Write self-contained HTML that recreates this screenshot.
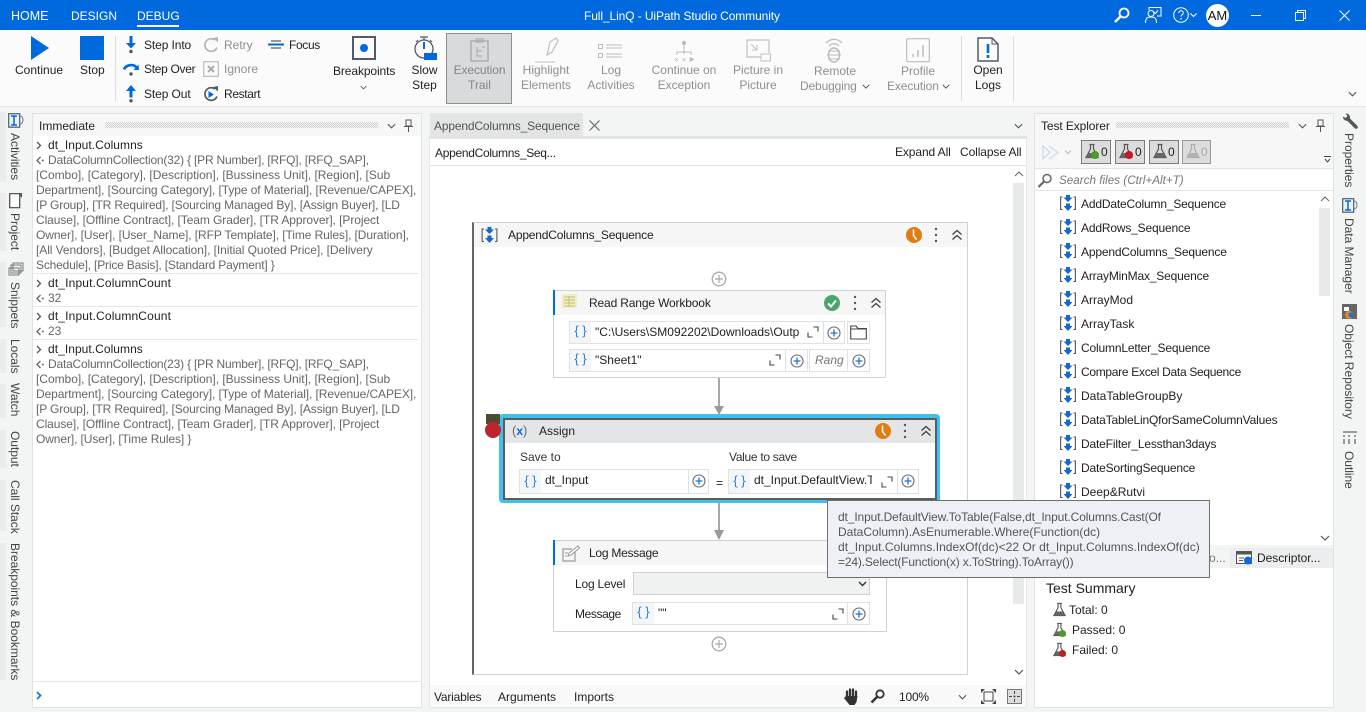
<!DOCTYPE html>
<html><head><meta charset="utf-8"><title>Full_LinQ - UiPath Studio Community</title>
<style>
html,body{margin:0;padding:0}
body{width:1366px;height:712px;overflow:hidden;position:relative;background:#f3f4f4;font:12px/16px "Liberation Sans",sans-serif;color:#222}
.t,.b,svg.a{position:absolute}
.t{white-space:nowrap}
.c{text-align:center;transform:translateX(-50%)}
.w{color:#fff}.g{color:#8f8f8f}.r{color:#666}
.l{letter-spacing:-.17px}
.v{writing-mode:vertical-rl;color:#444;white-space:nowrap;position:absolute;left:7px;line-height:16px;letter-spacing:-.03px}
.vr{left:1341px}
.band{position:absolute;left:0;width:6px;background:#ebecec}
.f{position:absolute;background:#fff;border:1px solid #dfe2e5;box-sizing:border-box}
.br{position:absolute;color:#2b7de0;font-size:13px;line-height:18px;text-align:center;background:#f4f5f6}
.dots{position:absolute;height:6px;background-image:conic-gradient(#cfcfcf 25%,transparent 0 50%,#cfcfcf 0 75%,transparent 0);background-size:2px 2px}
</style></head><body>
<svg width="0" height="0" style="position:absolute"><defs>
<symbol id="seq" viewBox="0 0 16 16"><path d="M2.500 2H.6V14.500H2.500M13.500 2H15.400V14.500H13.500" fill="none" stroke="#555" stroke-width="1.100"/><path d="M6 0h4v2.500h2.500L8 7 3.500 2.500H6zM6 8.500h4v2.500h2.500L8 16 3.500 11H6z" fill="#0f6ad8"/></symbol>
<symbol id="plus" viewBox="0 0 14 14"><circle cx="7" cy="7" r="6" fill="#fff" stroke="#667" stroke-width="1.100"/><path d="M7 3.500v7M3.500 7h7" stroke="#1a73d9" stroke-width="1.300"/></symbol>
<symbol id="gplus" viewBox="0 0 16 16"><circle cx="8" cy="8" r="6.800" fill="#fff" stroke="#a9a9a9" stroke-width="1.300"/><path d="M8 4v8M4 8h8" stroke="#a9a9a9" stroke-width="1.200"/></symbol>
<symbol id="exp" viewBox="0 0 12 12"><path d="M1 6.500V11H5.500M6.500 1H11V5.500" fill="none" stroke="#444" stroke-width="1.100"/></symbol>
<symbol id="col" viewBox="0 0 12 12"><path d="M1.500 5.500L6 1.500l4.500 4M1.500 10.500L6 6.500l4.500 4" fill="none" stroke="#444" stroke-width="1.400"/></symbol>
<symbol id="dots" viewBox="0 0 4 16"><circle cx="2" cy="2" r="1.200" fill="#555"/><circle cx="2" cy="8" r="1.200" fill="#555"/><circle cx="2" cy="14" r="1.200" fill="#555"/></symbol>
<symbol id="clock" viewBox="0 0 16 16"><circle cx="8" cy="8" r="8" fill="#e07c10"/><path d="M7.500 2.500V8.500L10.500 12.500" fill="none" stroke="#fff" stroke-width="1.500"/></symbol>
<symbol id="flask" viewBox="0 0 16 16"><path d="M5.500 1.500h5M6.500 1.500V6L2 14.500h12L9.500 6V1.500" fill="none" stroke="#555" stroke-width="1.200"/><path d="M4.500 10h7L13.500 14.500h-11z" fill="#666"/></symbol>
<symbol id="cv" viewBox="0 0 10 6"><path d="M1 1l4 4 4-4" fill="none" stroke="#555" stroke-width="1.200"/></symbol>
<symbol id="pr" viewBox="0 0 6 9"><path d="M1 1l3.500 3.500L1 8" fill="none" stroke="#555" stroke-width="1.300"/></symbol>
<symbol id="rs" viewBox="0 0 8 9"><path d="M4.500 1L1 4.500 4.500 8" fill="none" stroke="#666" stroke-width="1.300"/><circle cx="6.800" cy="4.500" r="1" fill="#666"/></symbol>
<symbol id="act" viewBox="0 0 16 15"><rect x=".7" y=".7" width="11" height="13.500" fill="#eaf2fc" stroke="#4f5b66" stroke-width="1.200"/><path d="M3 3h6M6 3v9M3 12h6" stroke="#0069de" stroke-width="1.500"/><path d="M12 3c4 0 4 8 0 8" fill="none" stroke="#777"/></symbol>
</defs></svg>

<!-- title bar -->
<div class="b" style="left:0;top:0;width:1366px;height:30px;background:#0069de"></div>
<div class="t w" style="left:11px;top:8px;font-size:12.500px">HOME</div>
<div class="t w" style="left:71px;top:8px;font-size:12px">DESIGN</div>
<div class="t w" style="left:137px;top:8px;font-size:12px">DEBUG</div>
<div class="b" style="left:137px;top:25px;width:42px;height:1.500px;background:#fff"></div>
<div class="t w" style="left:584px;top:8px;letter-spacing:-.1px">Full_LinQ - UiPath Studio Community</div>
<svg class="a" style="left:1113px;top:6px" width="18" height="18" viewBox="0 0 18 18"><circle cx="11" cy="7" r="4.500" fill="none" stroke="#fff" stroke-width="1.800"/><path d="M7.500 10.500L2 16" stroke="#fff" stroke-width="2.500"/></svg>
<svg class="a" style="left:1144px;top:6px" width="18" height="18" viewBox="0 0 18 18"><path d="M5 4V1.500H17V10H13" fill="none" stroke="#fff"/><path d="M10 6l1.500 1.500L14 4.500" fill="none" stroke="#fff"/><circle cx="7" cy="7.500" r="3" fill="none" stroke="#fff"/><path d="M1.500 17c0-5 2-6 5.500-6s5.500 1 5.500 6" fill="none" stroke="#fff"/></svg>
<svg class="a" style="left:1173px;top:7px" width="26" height="16" viewBox="0 0 26 16"><circle cx="8" cy="8" r="7.300" fill="none" stroke="#fff"/><path d="M5.800 6c0-3 4.500-3 4.500 0 0 1.700-2.300 1.800-2.300 3.500" fill="none" stroke="#fff"/><circle cx="8" cy="11.700" r=".8" fill="#fff"/><path d="M17.500 6.500l3 3 3-3" fill="none" stroke="#fff" stroke-width="1.100"/></svg>
<div class="b" style="left:1206px;top:4px;width:23px;height:23px;border-radius:50%;background:#fff"></div>
<div class="t c" style="left:1217.500px;top:8px;font-size:13px;color:#111">AM</div>
<div class="b" style="left:1251px;top:15px;width:10px;height:1px;background:#fff"></div>
<svg class="a" style="left:1295px;top:10px" width="11" height="11" viewBox="0 0 11 11"><path d="M.5 2.500h8v8h-8zM2.500 2.500V.5h8v8H8.500" fill="none" stroke="#fff"/></svg>
<svg class="a" style="left:1339px;top:10px" width="11" height="11" viewBox="0 0 11 11"><path d="M.5.5l10 10M10.500.5l-10 10" stroke="#fff"/></svg>

<!-- ribbon -->
<div class="b" style="left:0;top:30px;width:1366px;height:76px;background:#fbfbfb;border-bottom:1px solid #e8e8e8"></div>
<svg class="a" style="left:31px;top:36px" width="18" height="24"><path d="M0 0L18 12 0 24z" fill="#0069de"/></svg>
<div class="b" style="left:80px;top:36px;width:24px;height:24px;background:#0069de"></div>
<div class="t" style="left:15px;top:62px">Continue</div>
<div class="t" style="left:80px;top:62px">Stop</div>
<div class="b" style="left:115px;top:36px;width:1px;height:65px;background:#ddd"></div>
<svg class="a" style="left:123px;top:36px" width="16" height="18" viewBox="0 0 16 18"><path d="M6.500 0h3v7H13L8 12.500 3 7h3.500z" fill="#0069de"/><circle cx="8" cy="15.500" r="1.700" fill="#555"/></svg>
<svg class="a" style="left:123px;top:62px" width="16" height="15" viewBox="0 0 16 15"><path d="M1 7.500C3 2.500 11 1.500 14 6" fill="none" stroke="#0069de" stroke-width="2.600"/><path d="M16 8L10.500 8 15.500 2.500z" fill="#0069de"/><circle cx="8" cy="12" r="1.700" fill="#555"/></svg>
<svg class="a" style="left:123px;top:85px" width="16" height="18" viewBox="0 0 16 18"><path d="M6.500 12.500h3V6H13L8 0 3 6h3.500z" fill="#0069de"/><circle cx="8" cy="15.800" r="1.700" fill="#555"/></svg>
<div class="t" style="left:144px;top:37px;letter-spacing:-.1px">Step Into</div>
<div class="t" style="left:144px;top:61px;letter-spacing:-.3px">Step Over</div>
<div class="t" style="left:144px;top:86px;letter-spacing:-.1px">Step Out</div>
<svg class="a" style="left:203px;top:37px" width="17" height="16" viewBox="0 0 17 16"><path d="M14 10.500A6.300 6.300 0 1 1 12 3" fill="none" stroke="#b4b4b4" stroke-width="1.700"/><path d="M10 1l5-1v5.500z" fill="#b4b4b4"/></svg>
<svg class="a" style="left:203px;top:61px" width="16" height="16" viewBox="0 0 16 16"><rect x=".7" y=".7" width="14.600" height="14.600" fill="none" stroke="#bbb" stroke-width="1.200"/><path d="M5 5l6 6M11 5l-6 6" stroke="#aaa" stroke-width="2"/></svg>
<svg class="a" style="left:203px;top:86px" width="17" height="16" viewBox="0 0 17 16"><path d="M14 10.500A6.300 6.300 0 1 1 12 3" fill="none" stroke="#4f5b66" stroke-width="1.700"/><path d="M10 1l5-1v5.500z" fill="#4f5b66"/><path d="M5.500 5l5.500 3.500L5.500 12z" fill="#0069de"/></svg>
<div class="t g" style="left:224px;top:37px">Retry</div>
<div class="t g" style="left:224px;top:61px">Ignore</div>
<div class="t" style="left:224px;top:86px;letter-spacing:-.35px">Restart</div>
<svg class="a" style="left:268px;top:40px" width="16" height="10" viewBox="0 0 16 10"><path d="M3 1h10M0 4.500h16M3 8h10" stroke="#333"/><path d="M0 3.500h16v2H0z" fill="#0069de"/></svg>
<div class="t" style="left:289px;top:37px;letter-spacing:-.35px">Focus</div>
<div class="b" style="left:352px;top:36px;width:24px;height:24px;box-sizing:border-box;border:2px solid #4f5b66"></div>
<div class="b" style="left:360px;top:44px;width:8px;height:8px;border-radius:50%;background:#0069de"></div>
<div class="t" style="left:333px;top:63px;letter-spacing:-.1px">Breakpoints</div>
<svg class="a" style="left:360px;top:85px" width="7" height="5"><use href="#cv"/></svg>
<svg class="a" style="left:414px;top:36px" width="23" height="25" viewBox="0 0 23 25"><path d="M6 1h8M10 1v3M2 6l2-2M18 6l-2-2" stroke="#4f5b66" stroke-width="1.200"/><circle cx="10" cy="13" r="9" fill="none" stroke="#4f5b66" stroke-width="1.300"/><path d="M10 6v7" stroke="#0069de" stroke-width="2"/><rect x="10" y="17" width="13" height="7" fill="#0069de"/></svg>
<div class="t c" style="left:424.500px;top:62px">Slow</div>
<div class="t c" style="left:424.500px;top:77px">Step</div>
<div class="b" style="left:446px;top:33px;width:66px;height:71px;box-sizing:border-box;background:#d9dadc;border:1px solid #8f8f8f"></div>
<svg class="a" style="left:470px;top:38px" width="19" height="24" viewBox="0 0 19 24"><rect x="1" y="3" width="17" height="20" fill="none" stroke="#a7a7a7" stroke-width="1.300"/><path d="M6 3V1h7v3H6zM7 9v9h5M7 13h5M12 9h3" fill="none" stroke="#a7a7a7"/></svg>
<div class="t c g" style="left:479.500px;top:62px;color:#858585;letter-spacing:-.1px">Execution</div>
<div class="t c g" style="left:479.500px;top:77px;color:#858585">Trail</div>
<svg class="a" style="left:533px;top:37px" width="28" height="27" viewBox="0 0 28 27"><path d="M17 5l6-4 2 3-6 11-5 3z" fill="none" stroke="#c2c2c2" stroke-width="1.300"/><path d="M2 25h20" stroke="#c2c2c2"/></svg>
<div class="t c g" style="left:546px;top:62px">Highlight</div><div class="t c g" style="left:546px;top:77px">Elements</div>
<svg class="a" style="left:598px;top:43px" width="26" height="16" viewBox="0 0 26 16"><path d="M8 2h16M8 5h16M8 11h16M8 14h16" stroke="#bcbcbc"/><rect x=".5" y="1.500" width="4" height="4" fill="none" stroke="#bcbcbc"/><rect x=".5" y="10.500" width="4" height="4" fill="none" stroke="#bcbcbc"/></svg>
<div class="t c g" style="left:611px;top:62px">Log</div><div class="t c g" style="left:611px;top:77px">Activities</div>
<svg class="a" style="left:674px;top:40px" width="20" height="22" viewBox="0 0 20 22"><circle cx="10" cy="3" r="2.200" fill="#bcbcbc"/><path d="M10 5v9M3 15v-3h14v3" fill="none" stroke="#bcbcbc"/><path d="M1 18l3 3M4 18l-3 3M8.500 18l3 3M11.500 18l-3 3M16 17.500l4 2-4 2z" stroke="#bcbcbc" fill="#bcbcbc" stroke-width=".7"/></svg>
<div class="t c g" style="left:684px;top:62px">Continue on</div><div class="t c g" style="left:684px;top:77px">Exception</div>
<svg class="a" style="left:746px;top:39px" width="25" height="23" viewBox="0 0 25 23"><path d="M15 18H1V1h22v13" fill="none" stroke="#c0c0c0" stroke-width="1.200"/><rect x="15" y="15" width="9.500" height="7" fill="none" stroke="#c0c0c0"/><path d="M5 5l6 6M11 6v5H6" fill="none" stroke="#c0c0c0"/></svg>
<div class="t c g" style="left:758px;top:62px">Picture in</div><div class="t c g" style="left:758px;top:77px">Picture</div>
<svg class="a" style="left:822px;top:37px" width="24" height="27" viewBox="0 0 24 27"><path d="M4 6c5-5 11-5 16 0M7 9c3-3 7-3 10 0" fill="none" stroke="#bcbcbc" stroke-width="1.300"/><ellipse cx="12" cy="18" rx="5.500" ry="7" fill="none" stroke="#bcbcbc" stroke-width="1.500"/><path d="M6 14h12M5 18h14M6 22h12" stroke="#bcbcbc"/></svg>
<div class="t c g" style="left:835px;top:63px">Remote</div><div class="t g" style="left:800px;top:78px;letter-spacing:-.15px">Debugging</div>
<svg class="a" style="left:862px;top:84px" width="8" height="5"><use href="#cv"/></svg>
<svg class="a" style="left:906px;top:38px" width="24" height="25" viewBox="0 0 24 25"><rect x=".7" y=".7" width="22.600" height="23" rx="1" fill="none" stroke="#bcbcbc" stroke-width="1.200"/><path d="M7 19v-3M12 19v-7M17 19V7" stroke="#bcbcbc" stroke-width="1.500"/></svg>
<div class="t c g" style="left:918px;top:63px">Profile</div><div class="t g" style="left:887px;top:78px;letter-spacing:-.1px">Execution</div>
<svg class="a" style="left:942px;top:84px" width="8" height="5"><use href="#cv"/></svg>
<div class="b" style="left:961px;top:36px;width:1px;height:65px;background:#ddd"></div>
<svg class="a" style="left:977px;top:37px" width="22" height="25" viewBox="0 0 22 25"><path d="M1 1h14l6 6v17H1z" fill="none" stroke="#4f5b66" stroke-width="1.500"/><path d="M15 1v6h6" fill="none" stroke="#4f5b66"/><path d="M9.700 7h2.600v9H9.700zM9.700 18h2.600v3H9.700z" fill="#0069de"/></svg>
<div class="t c" style="left:988px;top:62px">Open</div><div class="t c" style="left:988px;top:77px">Logs</div>
<div class="b" style="left:1013px;top:36px;width:1px;height:65px;background:#ddd"></div>
<svg class="a" style="left:1348px;top:91px" width="9" height="6"><use href="#cv"/></svg>

<!-- left tabs -->
<div class="band" style="top:112px;height:70px"></div><div class="band" style="top:193px;height:58px"></div><div class="band" style="top:262px;height:65px"></div><div class="band" style="top:339px;height:34px"></div><div class="band" style="top:384px;height:34px"></div><div class="band" style="top:430px;height:38px"></div><div class="band" style="top:480px;height:51px"></div><div class="band" style="top:543px;height:137px"></div>
<svg class="a" style="left:8px;top:113px" width="16" height="15"><use href="#act"/></svg>
<svg class="a" style="left:9px;top:193px" width="13" height="16" viewBox="0 0 13 16"><path d="M.7.7h10v14h-10z" fill="#fff" stroke="#444" stroke-width="1.200"/><path d="M9 0h4v5z" fill="#555"/></svg>
<svg class="a" style="left:8px;top:262px" width="16" height="15" viewBox="0 0 16 15"><path d="M5 1h10v8H5zM3 3h10v8H3zM1 6h10v7H1z" fill="#f3f4f4" stroke="#777"/></svg>
<div class="v" style="top:133px">Activities</div>
<div class="v" style="top:213px">Project</div>
<div class="v" style="top:282px">Snippets</div>
<div class="v" style="top:339px">Locals</div>
<div class="v" style="top:383px">Watch</div>
<div class="v" style="top:431px">Output</div>
<div class="v" style="top:480px">Call Stack</div>
<div class="v" style="top:543px">Breakpoints &amp; Bookmarks</div>

<!-- immediate panel -->
<div class="b" style="left:32px;top:113px;width:390px;height:595px;box-sizing:border-box;background:#fff;border:1px solid #e1e3e3"></div>
<div class="b" style="left:33px;top:114px;width:388px;height:22px;background:#f7f7f7"></div>
<div class="t" style="left:39px;top:118px">Immediate</div>
<div class="dots" style="left:105px;top:122px;width:273px"></div>
<svg class="a" style="left:387px;top:123px" width="9" height="6"><use href="#cv"/></svg>
<svg class="a" style="left:404px;top:119px" width="9" height="13" viewBox="0 0 9 13"><path d="M2 1h5v6H2zM0 7.500h9M4.500 8v5" fill="none" stroke="#555"/></svg>
<svg class="a" style="left:36px;top:141px" width="6" height="9"><use href="#pr"/></svg>
<div class="t" style="left:48px;top:137px;letter-spacing:.05px">dt_Input.Columns</div>
<svg class="a" style="left:36px;top:156px" width="8" height="9"><use href="#rs"/></svg>
<div class="t r" style="left:36px;top:153px;line-height:15px"><span style="margin-left:12px;letter-spacing:-.2px">DataColumnCollection(32) { [PR Number], [RFQ], [RFQ_SAP],</span><br><span style="letter-spacing:-.03px">[Combo], [Category], [Description], [Bussiness Unit], [Region], [Sub</span><br><span style="letter-spacing:-.085px">Department], [Sourcing Category], [Type of Material], [Revenue/CAPEX],</span><br><span style="letter-spacing:-.14px">[P Group], [TR Required], [Sourcing Managed By], [Assign Buyer], [LD</span><br><span style="letter-spacing:-.08px">Clause], [Offline Contract], [Team Grader], [TR Approver], [Project</span><br><span style="letter-spacing:-.09px">Owner], [User], [User_Name], [RFP Template], [Time Rules], [Duration],</span><br><span style="letter-spacing:-.07px">[All Vendors], [Budget Allocation], [Initial Quoted Price], [Delivery</span><br><span style="letter-spacing:-.18px">Schedule], [Price Basis], [Standard Payment] }</span></div>
<div class="b" style="left:33px;top:273px;width:385px;height:1px;background:#e6e6e6"></div>
<svg class="a" style="left:36px;top:279px" width="6" height="9"><use href="#pr"/></svg>
<div class="t" style="left:48px;top:275px;letter-spacing:.15px">dt_Input.ColumnCount</div>
<svg class="a" style="left:36px;top:294px" width="8" height="9"><use href="#rs"/></svg><div class="t r" style="left:48px;top:290px">32</div>
<div class="b" style="left:33px;top:306px;width:385px;height:1px;background:#e6e6e6"></div>
<svg class="a" style="left:36px;top:312px" width="6" height="9"><use href="#pr"/></svg>
<div class="t" style="left:48px;top:308px;letter-spacing:.15px">dt_Input.ColumnCount</div>
<svg class="a" style="left:36px;top:327px" width="8" height="9"><use href="#rs"/></svg><div class="t r" style="left:48px;top:323px">23</div>
<div class="b" style="left:33px;top:339px;width:385px;height:1px;background:#e6e6e6"></div>
<svg class="a" style="left:36px;top:345px" width="6" height="9"><use href="#pr"/></svg>
<div class="t" style="left:48px;top:341px;letter-spacing:.05px">dt_Input.Columns</div>
<svg class="a" style="left:36px;top:360px" width="8" height="9"><use href="#rs"/></svg>
<div class="t r" style="left:36px;top:357px;line-height:15px"><span style="margin-left:12px;letter-spacing:-.2px">DataColumnCollection(23) { [PR Number], [RFQ], [RFQ_SAP],</span><br><span style="letter-spacing:-.03px">[Combo], [Category], [Description], [Bussiness Unit], [Region], [Sub</span><br><span style="letter-spacing:-.085px">Department], [Sourcing Category], [Type of Material], [Revenue/CAPEX],</span><br><span style="letter-spacing:-.14px">[P Group], [TR Required], [Sourcing Managed By], [Assign Buyer], [LD</span><br><span style="letter-spacing:-.08px">Clause], [Offline Contract], [Team Grader], [TR Approver], [Project</span><br><span style="letter-spacing:-.1px">Owner], [User], [Time Rules] }</span></div>
<div class="b" style="left:33px;top:681px;width:388px;height:1px;background:#e6e6e6"></div>
<svg class="a" style="left:36px;top:691px" width="6" height="9" viewBox="0 0 6 9"><path d="M1 1l3.500 3.500L1 8" fill="none" stroke="#1a73d9" stroke-width="1.800"/></svg>

<!-- center panel -->
<div class="b" style="left:430px;top:113px;width:153px;height:25px;background:#e3e5e5"></div>
<div class="b" style="left:429px;top:136px;width:598px;height:2px;background:#e3e5e5"></div>
<div class="t" style="left:434px;top:118px;color:#555;letter-spacing:-.16px">AppendColumns_Sequence</div>
<svg class="a" style="left:589px;top:120px" width="11" height="11" viewBox="0 0 11 11"><path d="M.5.5l10 10M10.500.5l-10 10" stroke="#666" stroke-width="1.100"/></svg>
<svg class="a" style="left:1014px;top:123px" width="9" height="6"><use href="#cv"/></svg>
<div class="b" style="left:429px;top:138px;width:598px;height:570px;background:#fff;box-shadow:0 0 0 1px #e6e8e8 inset"></div>
<div class="b" style="left:430px;top:165px;width:596px;height:1px;background:#dfe1e1"></div>
<div class="t" style="left:435px;top:145px;letter-spacing:-.3px">AppendColumns_Seq...</div>
<div class="t" style="left:895px;top:144px;letter-spacing:-.1px">Expand All</div>
<div class="t" style="left:960px;top:144px;letter-spacing:-.1px">Collapse All</div>
<div class="b" style="left:1013px;top:183px;width:11px;height:421px;background:#e8e9e9"></div>
<svg class="a" style="left:1014px;top:171px" width="10" height="6"><path d="M1 5l4-4 4 4" fill="none" stroke="#666" stroke-width="1.100"/></svg>
<svg class="a" style="left:1014px;top:669px" width="10" height="6"><use href="#cv"/></svg>

<!-- sequence -->
<div class="b" style="left:472px;top:222px;width:496px;height:453px;box-sizing:border-box;border:1px solid #cbd2d8;border-left:2px solid #666;background:#fff"></div>
<div class="b" style="left:474px;top:223px;width:493px;height:24px;background:#f6f6f6"></div>
<svg class="a" style="left:481px;top:227px" width="17" height="16"><use href="#seq"/></svg>
<div class="t" style="left:508px;top:227px;letter-spacing:-.18px">AppendColumns_Sequence</div>
<svg class="a" style="left:906px;top:227px" width="16" height="16"><use href="#clock"/></svg>
<svg class="a" style="left:934px;top:227px" width="4" height="16"><use href="#dots"/></svg>
<svg class="a" style="left:951px;top:229px" width="12" height="12"><use href="#col"/></svg>
<svg class="a" style="left:711px;top:271px" width="16" height="16"><use href="#gplus"/></svg>

<!-- read range -->
<div class="b" style="left:553px;top:290px;width:333px;height:88px;box-sizing:border-box;background:#fff;border:1px solid #cbd2d8"></div>
<div class="b" style="left:555px;top:291px;width:330px;height:24px;background:#f6f6f6"></div>
<div class="b" style="left:553px;top:290px;width:2px;height:25px;background:#0069de"></div>
<svg class="a" style="left:562px;top:294px" width="17" height="17" viewBox="0 0 17 17"><rect width="15" height="14" fill="#f0efc0"/><path d="M2 3h11M2 6h11M2 9h11M2 12h11M7 2v11" stroke="#c4bf80"/></svg>
<div class="t" style="left:589px;top:295px;letter-spacing:-.15px">Read Range Workbook</div>
<svg class="a" style="left:824px;top:295px" width="16" height="16" viewBox="0 0 16 16"><circle cx="8" cy="8" r="8" fill="#4ba56b"/><path d="M4 8.500l3 3 5-6" fill="none" stroke="#fff" stroke-width="2"/></svg>
<svg class="a" style="left:853px;top:295px" width="4" height="16"><use href="#dots"/></svg>
<svg class="a" style="left:870px;top:297px" width="12" height="12"><use href="#col"/></svg>

<div class="f" style="left:569px;top:321px;width:276px;height:23px"></div>
<div class="br" style="left:570px;top:322px;width:21px;height:21px">{ }</div>
<div class="t" style="left:595px;top:324px;width:205px;overflow:hidden">"C:\Users\SM092202\Downloads\Outp</div>
<svg class="a" style="left:807px;top:326px" width="12" height="12"><use href="#exp"/></svg>
<div class="b" style="left:823px;top:322px;width:1px;height:21px;background:#dfe2e5"></div>
<svg class="a" style="left:827px;top:326px" width="14" height="14"><use href="#plus"/></svg>
<div class="f" style="left:847px;top:321px;width:23px;height:23px"></div>
<svg class="a" style="left:850px;top:325px" width="17" height="15" viewBox="0 0 17 15"><path d="M.7 14V1H6l2 2.500h8.300V14zM.7 4h15.600" fill="none" stroke="#444" stroke-width="1.100"/></svg>
<div class="f" style="left:569px;top:349px;width:239px;height:23px"></div>
<div class="br" style="left:570px;top:350px;width:21px;height:21px">{ }</div>
<div class="t" style="left:595px;top:352px">"Sheet1"</div>
<svg class="a" style="left:769px;top:354px" width="12" height="12"><use href="#exp"/></svg>
<div class="b" style="left:785px;top:350px;width:1px;height:21px;background:#dfe2e5"></div>
<svg class="a" style="left:790px;top:354px" width="14" height="14"><use href="#plus"/></svg>
<div class="f" style="left:809px;top:349px;width:61px;height:23px"></div>
<div class="t" style="left:815px;top:352px;font-style:italic;color:#777;width:30px;overflow:hidden">Rang</div>
<div class="b" style="left:847px;top:350px;width:1px;height:21px;background:#dfe2e5"></div>
<svg class="a" style="left:852px;top:354px" width="14" height="14"><use href="#plus"/></svg>

<!-- connectors -->
<div class="b" style="left:718px;top:378px;width:2px;height:30px;background:#a8a8a8"></div>
<svg class="a" style="left:714px;top:406px" width="10" height="9"><path d="M0 0h10L5 9z" fill="#999"/></svg>
<div class="b" style="left:718px;top:501px;width:2px;height:30px;background:#a8a8a8"></div>
<svg class="a" style="left:714px;top:530px" width="10" height="10"><path d="M0 0h10L5 10z" fill="#999"/></svg>

<!-- assign -->
<div class="b" style="left:499px;top:414px;width:441px;height:89px;box-sizing:border-box;border:4px solid #3fc1ee;border-radius:4px;background:#fff"></div>
<div class="b" style="left:503px;top:418px;width:434px;height:82px;box-sizing:border-box;border:2px solid #5c5c5c;background:#fff"></div>
<div class="b" style="left:505px;top:420px;width:430px;height:23px;background:#e3e5e7"></div>
<div class="b" style="left:486px;top:414px;width:14px;height:10px;background:#4f4a34"></div>
<div class="b" style="left:485px;top:422px;width:16px;height:16px;border-radius:50%;background:#bd252c"></div>
<div class="t" style="left:512px;top:423px;font-size:12px;color:#667"><span style="font-size:13px">(</span><b style="color:#0069de">x</b><span style="font-size:13px">)</span></div>
<div class="t" style="left:539px;top:423px">Assign</div>
<svg class="a" style="left:875px;top:423px" width="16" height="16"><use href="#clock"/></svg>
<svg class="a" style="left:903px;top:423px" width="4" height="16"><use href="#dots"/></svg>
<svg class="a" style="left:920px;top:425px" width="12" height="12"><use href="#col"/></svg>
<div class="t" style="left:520px;top:449px;color:#333">Save to</div>
<div class="t" style="left:729px;top:449px;color:#333;letter-spacing:-.3px">Value to save</div>
<div class="f" style="left:519px;top:469px;width:190px;height:25px"></div>
<div class="br" style="left:520px;top:470px;width:21px;height:23px;line-height:22px">{ }</div>
<div class="t" style="left:545px;top:472px">dt_Input</div>
<div class="b" style="left:688px;top:470px;width:1px;height:23px;background:#dfe2e5"></div>
<svg class="a" style="left:692px;top:474px" width="14" height="14"><use href="#plus"/></svg>
<div class="t c" style="left:719.500px;top:475px">=</div>
<div class="f" style="left:728px;top:469px;width:191px;height:25px"></div>
<div class="br" style="left:729px;top:470px;width:21px;height:23px;line-height:22px">{ }</div>
<div class="t" style="left:754px;top:472px;width:118px;overflow:hidden">dt_Input.DefaultView.T</div>
<svg class="a" style="left:881px;top:476px" width="12" height="12"><use href="#exp"/></svg>
<div class="b" style="left:897px;top:470px;width:1px;height:23px;background:#dfe2e5"></div>
<svg class="a" style="left:901px;top:474px" width="14" height="14"><use href="#plus"/></svg>

<!-- log message -->
<div class="b" style="left:553px;top:540px;width:334px;height:92px;box-sizing:border-box;background:#fff;border:1px solid #cbd2d8"></div>
<div class="b" style="left:555px;top:541px;width:331px;height:24px;background:#f6f6f6"></div>
<div class="b" style="left:553px;top:540px;width:2px;height:25px;background:#0069de"></div>
<svg class="a" style="left:562px;top:545px" width="18" height="17" viewBox="0 0 18 17"><path d="M13 6v10H1V4h9" fill="none" stroke="#999" stroke-width="1.200"/><path d="M6 11l1-3 9-7 1.500 2-8.500 7z" fill="#fff" stroke="#999"/><path d="M3 8h3M3 11h2" stroke="#999"/></svg>
<div class="t" style="left:589px;top:545px;letter-spacing:-.25px">Log Message</div>
<div class="t" style="left:575px;top:576px;letter-spacing:-.2px">Log Level</div>
<div class="b" style="left:633px;top:572px;width:237px;height:23px;box-sizing:border-box;background:#f0f1f1;border:1px solid #cfd1d2"></div>
<svg class="a" style="left:858px;top:581px" width="9" height="6"><path d="M1 1l3.500 3.500L8 1" fill="none" stroke="#333" stroke-width="1.400"/></svg>
<div class="t" style="left:575px;top:606px;letter-spacing:-.4px">Message</div>
<div class="f" style="left:632px;top:602px;width:238px;height:23px"></div>
<div class="br" style="left:633px;top:603px;width:21px;height:21px">{ }</div>
<div class="t" style="left:658px;top:605px">""</div>
<svg class="a" style="left:832px;top:608px" width="12" height="12"><use href="#exp"/></svg>
<div class="b" style="left:847px;top:603px;width:1px;height:21px;background:#dfe2e5"></div>
<svg class="a" style="left:852px;top:607px" width="14" height="14"><use href="#plus"/></svg>
<svg class="a" style="left:711px;top:636px" width="16" height="16"><use href="#gplus"/></svg>

<!-- center bottom bar -->
<div class="b" style="left:430px;top:685px;width:596px;height:22px;background:#f9f9f9"></div>
<div class="t" style="left:434px;top:689px;letter-spacing:-.2px">Variables</div>
<div class="t" style="left:498px;top:689px">Arguments</div>
<div class="t" style="left:574px;top:689px">Imports</div>
<svg class="a" style="left:844px;top:688px" width="15" height="17" viewBox="0 0 15 17"><path d="M3 9V3.500M6 8V1.500M9 8V1.500M12 9V3.500" stroke="#333" stroke-width="2.300" stroke-linecap="round"/><path d="M2 8h11.500l-1 6-2 3H5.500L0 10z" fill="#333"/></svg>
<svg class="a" style="left:870px;top:689px" width="15" height="15" viewBox="0 0 15 15"><circle cx="10" cy="5" r="3.700" fill="none" stroke="#333" stroke-width="1.800"/><path d="M7 8l-5.500 5.500" stroke="#333" stroke-width="2.500"/></svg>
<div class="t" style="left:899px;top:689px;letter-spacing:-.2px">100%</div>
<svg class="a" style="left:958px;top:694px" width="9" height="6"><use href="#cv"/></svg>
<svg class="a" style="left:981px;top:689px" width="15" height="15" viewBox="0 0 15 15"><rect x="3" y="3" width="9" height="9" fill="none" stroke="#444"/><path d="M0 4V0h4zM15 4V0h-4zM0 11v4h4zM15 11v4h-4z" fill="#444"/></svg>
<div class="b" style="left:1007px;top:689px;width:15px;height:15px;box-sizing:border-box;background:#dcdcdc;border:1px solid #777"></div>
<svg class="a" style="left:1009px;top:691px" width="11" height="11" viewBox="0 0 11 11"><path d="M5.500 0v3M5.500 8v3M0 5.500h3M8 5.500h3" stroke="#444"/><circle cx="5.500" cy="5.500" r="1" fill="#444"/></svg>

<!-- test explorer -->
<div class="b" style="left:1034px;top:113px;width:300px;height:595px;box-sizing:border-box;background:#fff;border:1px solid #e1e3e3"></div>
<div class="b" style="left:1035px;top:114px;width:298px;height:54px;background:#f7f7f7"></div>
<div class="t" style="left:1041px;top:118px;letter-spacing:-.1px">Test Explorer</div>
<div class="dots" style="left:1116px;top:122px;width:173px"></div>
<svg class="a" style="left:1298px;top:123px" width="9" height="6"><use href="#cv"/></svg>
<svg class="a" style="left:1316px;top:119px" width="9" height="13" viewBox="0 0 9 13"><path d="M2 1h5v6H2zM0 7.500h9M4.500 8v5" fill="none" stroke="#555"/></svg>
<svg class="a" style="left:1042px;top:145px" width="17" height="15" viewBox="0 0 17 15"><path d="M1 1v13l7-6.500zM7 1l9 6.500L7 14" fill="none" stroke="#c7dcf7" stroke-width="1.300"/></svg>
<svg class="a" style="left:1064px;top:150px" width="8" height="5"><path d="M1 .5l3 3 3-3" fill="none" stroke="#bbb"/></svg>
<div class="b" style="left:1081px;top:140px;width:30px;height:24px;box-sizing:border-box;background:#dcdcdc;border:1px solid #7a7a7a"></div>
<div class="b" style="left:1115px;top:140px;width:30px;height:24px;box-sizing:border-box;background:#dcdcdc;border:1px solid #7a7a7a"></div>
<div class="b" style="left:1149px;top:140px;width:30px;height:24px;box-sizing:border-box;background:#dcdcdc;border:1px solid #7a7a7a"></div>
<div class="b" style="left:1182px;top:140px;width:29px;height:24px;box-sizing:border-box;background:#dcdcdc;border:1px solid #999"></div>
<svg class="a" style="left:1084px;top:143px" width="16" height="16"><use href="#flask"/></svg>
<div class="b" style="left:1091px;top:151px;width:8px;height:8px;border-radius:50%;background:#4c9a2a"></div>
<svg class="a" style="left:1118px;top:143px" width="16" height="16"><use href="#flask"/></svg>
<div class="b" style="left:1125px;top:151px;width:8px;height:8px;border-radius:50%;background:#c01b22"></div>
<svg class="a" style="left:1152px;top:143px" width="16" height="16"><use href="#flask"/></svg>
<svg class="a" style="left:1185px;top:143px;opacity:.35" width="16" height="16"><use href="#flask"/></svg>
<div class="t" style="left:1101px;top:144px">0</div><div class="t" style="left:1135px;top:144px">0</div><div class="t" style="left:1168px;top:144px">0</div><div class="t" style="left:1201px;top:144px;color:#aaa">0</div>
<svg class="a" style="left:1324px;top:156px" width="7" height="7"><path d="M0 .5h7M1 3l2.500 3L6 3" fill="none" stroke="#444"/></svg>
<div class="b" style="left:1035px;top:168px;width:298px;height:1px;background:#e3e3e3"></div>
<svg class="a" style="left:1037px;top:173px" width="16" height="15" viewBox="0 0 16 15"><circle cx="10" cy="5.500" r="4" fill="none" stroke="#666" stroke-width="1.500"/><path d="M7 8.500L1.500 14" stroke="#666" stroke-width="2.200"/></svg>
<div class="t" style="left:1059px;top:173px;font-style:italic;color:#777;font-size:11.700px">Search files (Ctrl+Alt+T)</div>
<div class="b" style="left:1035px;top:190px;width:298px;height:1px;background:#e3e3e3"></div>

<svg class="a" style="left:1060px;top:195px" width="16" height="16"><use href="#seq"/></svg><div class="t l" style="left:1081px;top:196px">AddDateColumn_Sequence</div>
<svg class="a" style="left:1060px;top:219px" width="16" height="16"><use href="#seq"/></svg><div class="t l" style="left:1081px;top:220px">AddRows_Sequence</div>
<svg class="a" style="left:1060px;top:243px" width="16" height="16"><use href="#seq"/></svg><div class="t l" style="left:1081px;top:244px">AppendColumns_Sequence</div>
<svg class="a" style="left:1060px;top:267px" width="16" height="16"><use href="#seq"/></svg><div class="t l" style="left:1081px;top:268px">ArrayMinMax_Sequence</div>
<svg class="a" style="left:1060px;top:291px" width="16" height="16"><use href="#seq"/></svg><div class="t" style="left:1081px;top:292px">ArrayMod</div>
<svg class="a" style="left:1060px;top:315px" width="16" height="16"><use href="#seq"/></svg><div class="t" style="left:1081px;top:316px">ArrayTask</div>
<svg class="a" style="left:1060px;top:339px" width="16" height="16"><use href="#seq"/></svg><div class="t l" style="left:1081px;top:340px">ColumnLetter_Sequence</div>
<svg class="a" style="left:1060px;top:363px" width="16" height="16"><use href="#seq"/></svg><div class="t" style="left:1081px;top:364px;letter-spacing:-.3px">Compare Excel Data Sequence</div>
<svg class="a" style="left:1060px;top:387px" width="16" height="16"><use href="#seq"/></svg><div class="t" style="left:1081px;top:388px">DataTableGroupBy</div>
<svg class="a" style="left:1060px;top:411px" width="16" height="16"><use href="#seq"/></svg><div class="t l" style="left:1081px;top:412px">DataTableLinQforSameColumnValues</div>
<svg class="a" style="left:1060px;top:435px" width="16" height="16"><use href="#seq"/></svg><div class="t l" style="left:1081px;top:436px">DateFilter_Lessthan3days</div>
<svg class="a" style="left:1060px;top:459px" width="16" height="16"><use href="#seq"/></svg><div class="t l" style="left:1081px;top:460px">DateSortingSequence</div>
<svg class="a" style="left:1060px;top:483px" width="16" height="16"><use href="#seq"/></svg><div class="t" style="left:1081px;top:484px">Deep&amp;Rutvi</div>

<div class="b" style="left:1319px;top:208px;width:11px;height:88px;background:#e8e9e9"></div>
<svg class="a" style="left:1320px;top:196px" width="10" height="6"><path d="M1 5l4-4 4 4" fill="none" stroke="#666" stroke-width="1.100"/></svg>
<svg class="a" style="left:1320px;top:535px" width="10" height="6"><use href="#cv"/></svg>
<div class="b" style="left:1035px;top:545px;width:298px;height:23px;background:#f3f4f4"></div>
<div class="b" style="left:1230px;top:548px;width:103px;height:20px;background:#ecedee"></div>
<div class="t" style="left:1209px;top:550px;color:#777">o...</div>
<svg class="a" style="left:1236px;top:551px" width="17" height="14" viewBox="0 0 17 14"><rect x=".5" y=".5" width="15" height="12" fill="#fff" stroke="#555"/><rect x=".5" y=".5" width="15" height="3" fill="#555"/><path d="M3 7h5M3 9.500h4" stroke="#555"/><circle cx="12" cy="9.500" r="4" fill="#0f6ad8"/></svg>
<div class="t" style="left:1257px;top:550px;letter-spacing:-.05px">Descriptor...</div>
<div class="t" style="left:1046px;top:580px;font-size:14px">Test Summary</div>
<svg class="a" style="left:1052px;top:602px" width="15" height="15"><use href="#flask"/></svg>
<div class="t" style="left:1069px;top:602px">Total: 0</div>
<svg class="a" style="left:1052px;top:622px" width="15" height="15"><use href="#flask"/></svg>
<div class="b" style="left:1059px;top:630px;width:7px;height:7px;border-radius:50%;background:#4c9a2a"></div>
<div class="t" style="left:1072px;top:622px">Passed: 0</div>
<svg class="a" style="left:1052px;top:642px" width="15" height="15"><use href="#flask"/></svg>
<div class="b" style="left:1059px;top:650px;width:7px;height:7px;border-radius:50%;background:#c01b22"></div>
<div class="t" style="left:1072px;top:642px">Failed: 0</div>

<!-- right tabs -->
<svg class="a" style="left:1342px;top:113px" width="16" height="16" viewBox="0 0 16 16"><path d="M6 6l8 8" stroke="#555" stroke-width="3.500" stroke-linecap="round"/><path d="M1 3.500A4 4 0 0 0 6.500 7.500L8 5A4 4 0 0 0 3.500 .5L5.500 3 3.500 5z" fill="#555"/></svg>
<div class="v vr" style="top:133px">Properties</div>
<svg class="a" style="left:1342px;top:198px" width="16" height="15"><use href="#act"/></svg>
<div class="v vr" style="top:218px">Data Manager</div>
<svg class="a" style="left:1342px;top:304px" width="16" height="16" viewBox="0 0 16 16"><rect width="15" height="15" fill="#666"/><rect x="2" y="3" width="5" height="4" fill="#fff"/><circle cx="7" cy="11" r="4" fill="#e8832a"/><circle cx="9" cy="11" r="2.500" fill="#1a73d9"/></svg>
<div class="v vr" style="top:324px">Object Repository</div>
<svg class="a" style="left:1342px;top:430px" width="16" height="16" viewBox="0 0 16 16"><path d="M1 2h14M2 5v2M7 5v2M13 5v2M2 9v5M7 9v5M13 9v5" stroke="#666" stroke-width="1.300"/></svg>
<div class="v vr" style="top:451px">Outline</div>

<!-- tooltip -->
<div class="b" style="left:827px;top:500px;width:383px;height:78px;box-sizing:border-box;background:#eef0f6;border:1px solid #6c7076"></div>
<div class="t" style="left:838px;top:510px;line-height:15px;color:#555"><span style="letter-spacing:-.12px">dt_Input.DefaultView.ToTable(False,dt_Input.Columns.Cast(Of</span><br>DataColumn).AsEnumerable.Where(Function(dc)<br><span style="letter-spacing:.02px">dt_Input.Columns.IndexOf(dc)&lt;22 Or dt_Input.Columns.IndexOf(dc)</span><br><span style="letter-spacing:-.15px">=24).Select(Function(x) x.ToString).ToArray())</span></div>
</body></html>
